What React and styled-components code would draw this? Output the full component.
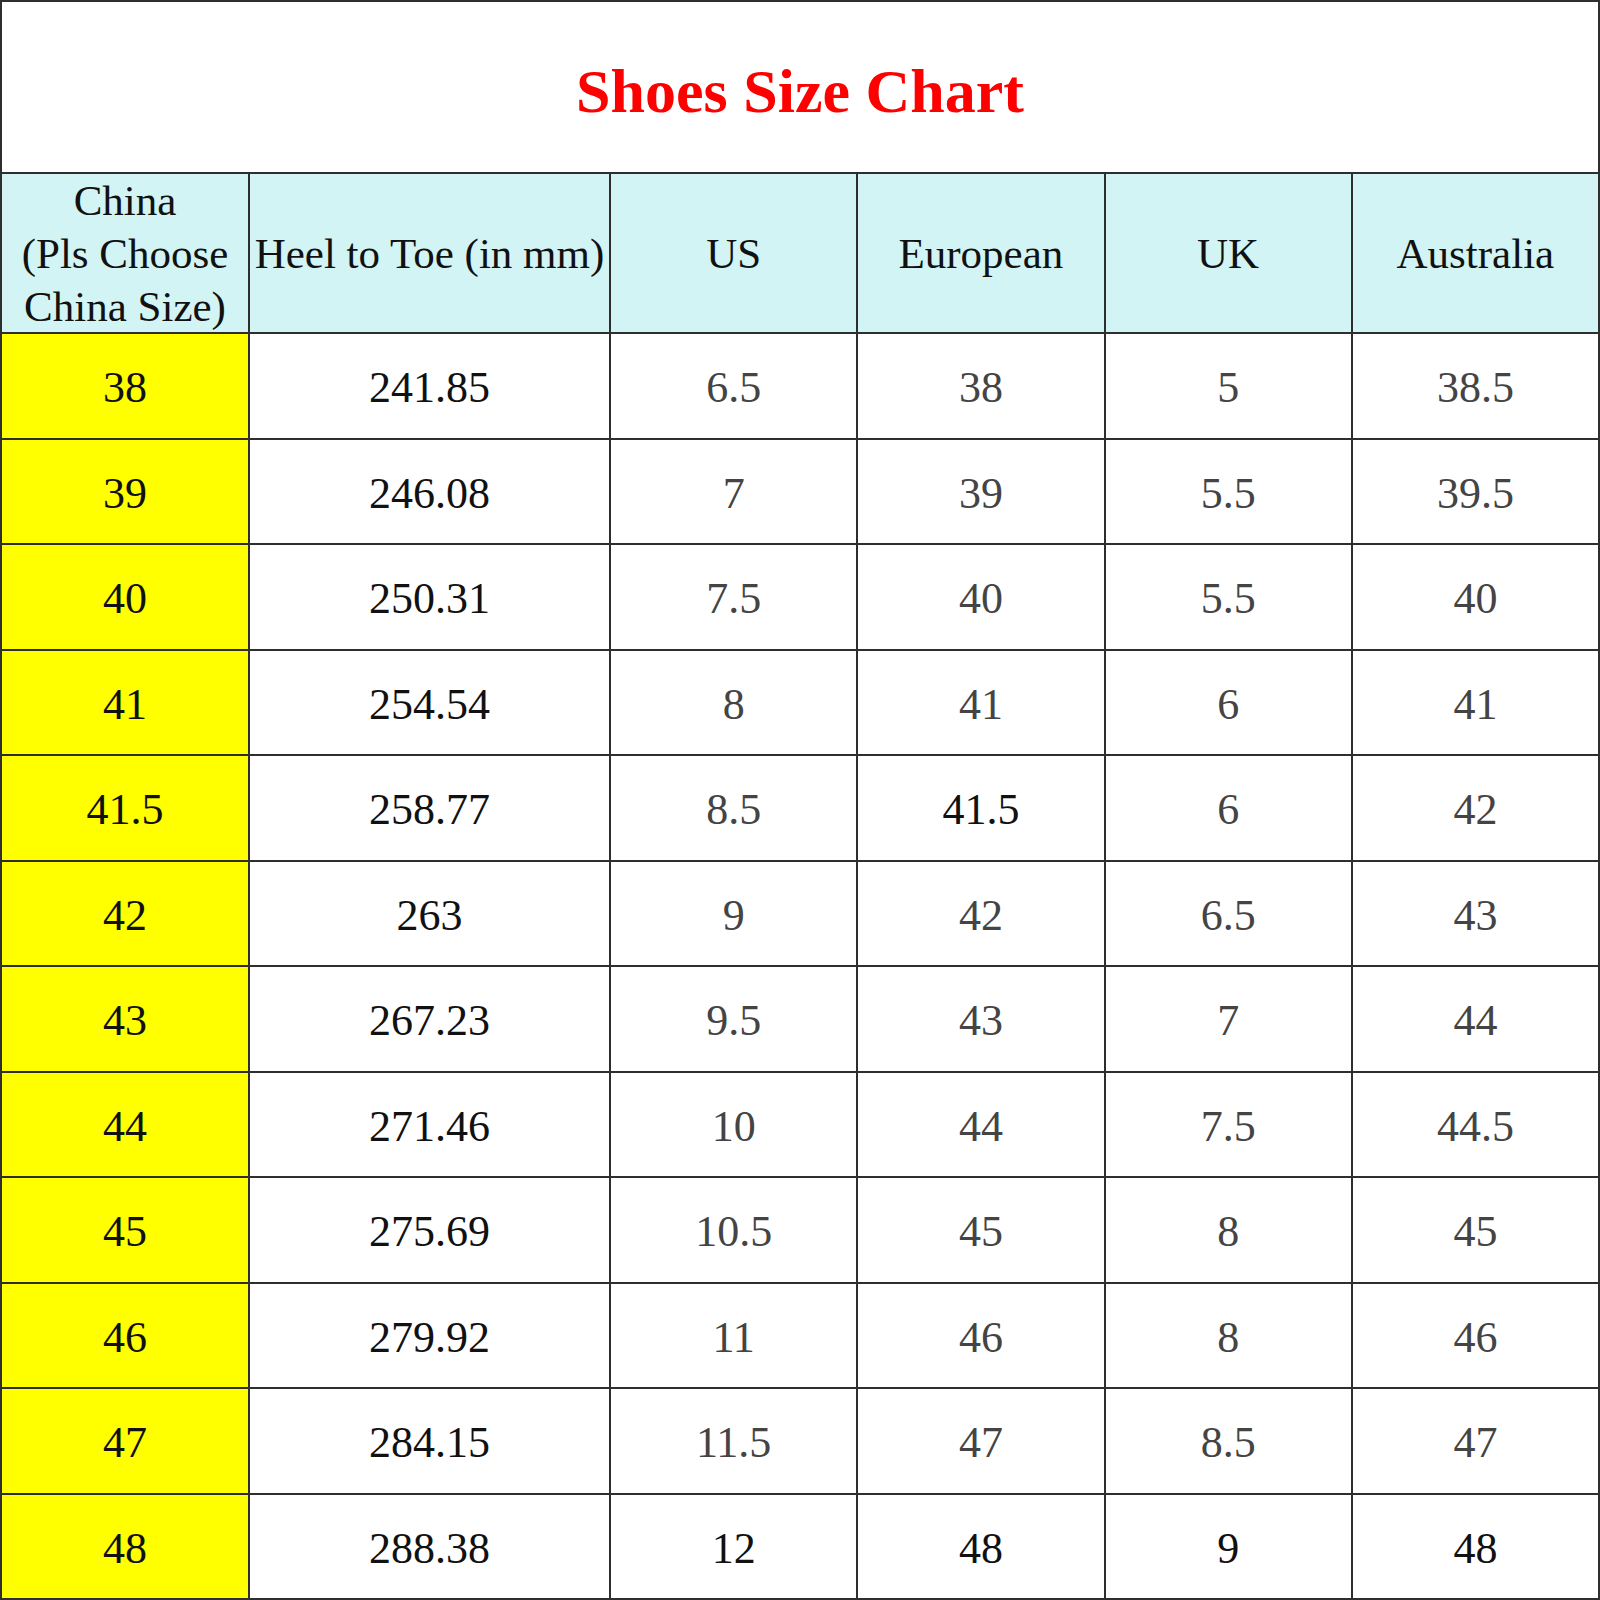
import React from 'react';
import styled, { createGlobalStyle } from 'styled-components';

const GlobalStyle = createGlobalStyle`
    html, body {
        margin: 0;
        padding: 0;
        background: #ffffff;
    }
`

const headers = ['China\n(Pls Choose\nChina Size)', 'Heel to Toe (in mm)', 'US', 'European', 'UK', 'Australia']

// [china, heel, us, eu, uk, au] ; "!" marks a value printed in solid black
const rows = [
    ['38', '241.85', '6.5', '38', '5', '38.5'],
    ['39', '246.08', '7', '39', '5.5', '39.5'],
    ['40', '250.31', '7.5', '40', '5.5', '40'],
    ['41', '254.54', '8', '41', '6', '41'],
    ['41.5', '258.77', '8.5', '!41.5', '6', '42'],
    ['42', '263', '9', '42', '6.5', '43'],
    ['43', '267.23', '9.5', '43', '7', '44'],
    ['44', '271.46', '10', '44', '7.5', '44.5'],
    ['45', '275.69', '10.5', '45', '8', '45'],
    ['46', '279.92', '11', '46', '8', '46'],
    ['47', '284.15', '11.5', '47', '8.5', '47'],
    ['48', '288.38', '!12', '!48', '!9', '!48'],
]

const App = () => {
    return (
        <>
            <GlobalStyle />
            <Sheet>
                <Title>Shoes Size Chart</Title>
                {headers.map((h) => (
                    <HeadCell key={h}>{h}</HeadCell>
                ))}
                {rows.map((row) => (
                    row.map((value, i) => {
                        const dark = i < 2 || value.startsWith('!')
                        return (
                            <Cell key={row[0] + '-' + i} $size={i === 0} $dark={dark}>
                                {value.replace('!', '')}
                            </Cell>
                        )
                    })
                ))}
            </Sheet>
        </>
    );
}

export default App;


const Sheet = styled.div`
    width: 1600px;
    height: 1600px;
    box-sizing: border-box;
    display: grid;
    grid-template-columns: 248px 361px repeat(4, 1fr);
    grid-template-rows: 172px 160px repeat(12, 1fr);
    border-top: 2px solid #2e2e2e;
    border-left: 2px solid #2e2e2e;
    font-family: "Liberation Serif", "Times New Roman", serif;
    background: #ffffff;
`

const Title = styled.div`
    grid-column: 1 / -1;
    display: flex;
    align-items: center;
    justify-content: center;
    border-right: 2px solid #2e2e2e;
    border-bottom: 2px solid #2e2e2e;
    color: #ff0000;
    font-weight: 700;
    font-size: 62px;
    padding-top: 8px;
`

const HeadCell = styled.div`
    display: flex;
    align-items: center;
    justify-content: center;
    text-align: center;
    white-space: pre-line;
    background: #d3f4f4;
    border-right: 2px solid #2e2e2e;
    border-bottom: 2px solid #2e2e2e;
    color: #111111;
    font-size: 43px;
    line-height: 53px;
`

const Cell = styled.div`
    display: flex;
    align-items: center;
    justify-content: center;
    background: ${props => props.$size ? '#ffff00' : '#ffffff'};
    border-right: 2px solid #2e2e2e;
    border-bottom: 2px solid #2e2e2e;
    color: ${props => props.$dark ? '#111111' : '#444444'};
    font-size: 44px;
    padding-top: 4px;
`
